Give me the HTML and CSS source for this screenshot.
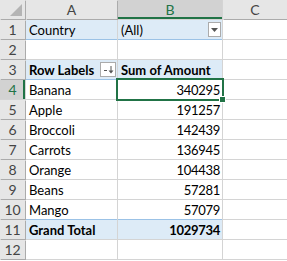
FILE: index.html
```html
<!DOCTYPE html>
<html lang="en">
<head>
    <meta charset="UTF-8">
    <title>Pivot Table</title>
    <link rel="stylesheet" href="styles.css">
</head>
<body>
    <div class="sheet">
        <div class="hd corner"><span class="tri"></span></div>
        <div class="hd col">A</div>
        <div class="hd col active-col">B</div>
        <div class="hd col">C</div>

        <div class="hd row">1</div>
        <div class="cell filter">Country</div>
        <div class="cell filter">(All)<span class="dd"><svg width="7" height="4" viewBox="0 0 7 4"><path d="M0 0h7L3.5 4z" fill="#555"/></svg></span></div>
        <div class="cell"></div>

        <div class="hd row">2</div>
        <div class="cell"></div>
        <div class="cell"></div>
        <div class="cell"></div>

        <div class="hd row">3</div>
        <div class="cell head bold">Row Labels<span class="dd"><svg width="11" height="9" viewBox="0 0 11 9"><path d="M1 5.5h3" stroke="#555" stroke-width="1"/><path d="M8 1v6" stroke="#555" stroke-width="1"/><path d="M5.5 5.5L8 8.5 10.5 5.5z" fill="#555"/></svg></span></div>
        <div class="cell head bold">Sum of Amount</div>
        <div class="cell"></div>

        <div class="hd row active-row">4</div>
        <div class="cell">Banana</div>
        <div class="cell num selected">340295<span class="handle"></span></div>
        <div class="cell"></div>

        <div class="hd row">5</div>
        <div class="cell">Apple</div>
        <div class="cell num">191257</div>
        <div class="cell"></div>

        <div class="hd row">6</div>
        <div class="cell">Broccoli</div>
        <div class="cell num">142439</div>
        <div class="cell"></div>

        <div class="hd row">7</div>
        <div class="cell">Carrots</div>
        <div class="cell num">136945</div>
        <div class="cell"></div>

        <div class="hd row">8</div>
        <div class="cell">Orange</div>
        <div class="cell num">104438</div>
        <div class="cell"></div>

        <div class="hd row">9</div>
        <div class="cell">Beans</div>
        <div class="cell num">57281</div>
        <div class="cell"></div>

        <div class="hd row">10</div>
        <div class="cell">Mango</div>
        <div class="cell num">57079</div>
        <div class="cell"></div>

        <div class="hd row">11</div>
        <div class="cell total bold">Grand Total</div>
        <div class="cell total bold num">1029734</div>
        <div class="cell"></div>

        <div class="hd row">12</div>
        <div class="cell"></div>
        <div class="cell"></div>
        <div class="cell"></div>
    </div>
</body>
</html>
```

FILE: styles.css
```css
body {
    margin: 0;
    background: #ffffff;
    font-family: Lato, "Liberation Sans", sans-serif;
    font-size: 13px;
    color: #000;
}
.sheet {
    display: grid;
    grid-template-columns: 25px 91px 104px 64px;
    grid-auto-rows: 19px;
    gap: 1px;
    background: #d4d4d4;
    width: 287px;
    padding-bottom: 1px;
}
.hd {
    background: #e6e6e6;
    color: #444;
    font-size: 14px;
    display: flex;
    align-items: center;
    justify-content: center;
    box-shadow: 1px 1px 0 #ababab;
}
.corner {
    justify-content: flex-end;
    align-items: flex-end;
    padding: 0 3px 3px 0;
}
.tri {
    width: 0;
    height: 0;
    border-left: 12px solid transparent;
    border-bottom: 12px solid #b4b4b4;
}
.active-col {
    background: #d2d2d2;
    color: #217346;
    box-shadow: inset 0 -2px 0 #217346;
}
.active-row {
    background: #d2d2d2;
    color: #217346;
    box-shadow: inset -2px 0 0 #217346;
}
.cell {
    background: #fff;
    display: flex;
    align-items: center;
    padding: 0 3px;
    white-space: nowrap;
    position: relative;
}
.num {
    justify-content: flex-end;
    padding-right: 2px;
    letter-spacing: -0.3px;
}
.bold {
    font-weight: bold;
}
.filter {
    background: #ddebf7;
    box-shadow: 0 1px 0 #9bc2e6;
}
.head {
    background: #ddebf7;
    box-shadow: 0 1px 0 #9bc2e6;
}
.total {
    background: #ddebf7;
    box-shadow: 0 -1px 0 #9bc2e6;
}
.dd {
    margin-left: auto;
    width: 13px;
    height: 15px;
    border: 1px solid #ababab;
    background: #fff;
    display: flex;
    align-items: center;
    justify-content: center;
    box-sizing: border-box;
    letter-spacing: 0;
}
.filter .dd {
    margin-right: -2px;
}
.head .dd {
    width: 16px;
    margin-right: -2px;
}
.selected {
    outline: 2px solid #217346;
    z-index: 1;
}
.handle {
    position: absolute;
    right: -4px;
    bottom: -4px;
    width: 5px;
    height: 5px;
    background: #217346;
    border: 1px solid #fff;
}
```
